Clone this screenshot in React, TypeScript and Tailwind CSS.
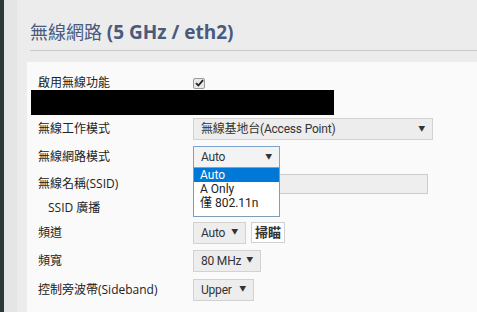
import React from "react";

const font = { fontFamily: '"Open Sans", "Noto Sans CJK TC", sans-serif' };
const ctl = { fontFamily: 'Roboto, "Noto Sans CJK TC", sans-serif' };

function Arrow() {
  return <span className="text-[7px] leading-none text-[#333]">▼</span>;
}

function Select({ text, w, focused = false }: { text: string; w: string; focused?: boolean }) {
  return (
    <div
      style={ctl}
      className={`${w} h-[22px] flex items-center justify-between pl-[7px] pr-[7px] border text-[12px] tracking-[-0.2px] text-[#333] ${
        focused ? "border-[#7da2ce] bg-[#f3f3f3]" : "border-[#d2d2d2] bg-[#ededed]"
      }`}
    >
      <span>{text}</span>
      <Arrow />
    </div>
  );
}

function Row({ label, h, children, indent = false }: { label: string; h: string; children?: React.ReactNode; indent?: boolean }) {
  return (
    <div className={`flex items-center ${h}`}>
      <div className={`w-[166px] shrink-0 text-[12px] text-[#222] ${indent ? "pl-[21px]" : "pl-[11px]"}`}>{label}</div>
      <div className="flex items-center gap-[5px] flex-1">{children}</div>
    </div>
  );
}

export default function App() {
  return (
    <div className="w-[477px] h-[312px] flex overflow-hidden" style={font}>
      <div className="w-[4px] bg-[#2c3838] shrink-0" />
      <div className="w-[13px] bg-[#e5e5e5] shrink-0" />
      <div className="flex-1 bg-[#ececec] flex flex-col">
        <div className="ml-[13px] h-[51px] border-b border-[#c9c9c9] flex items-end pb-[8px]">
          <span className="text-[18px] leading-none text-[#4a5a7c]">
            <span style={{ fontFamily: '"Noto Sans CJK TC", sans-serif' }}>無線網路</span>{" "}
            <span className="font-bold text-[19px]">(5 GHz / eth2)</span>
          </span>
        </div>
        <div className="mt-[11px] ml-[10px] flex-1 bg-[#fafafa] pt-[14px]">
          <Row label="啟用無線功能" h="h-[14px]">
            <div className="w-[12px] h-[11px] border border-[#9a9a9a] rounded-[2px] bg-[#e9e9e9] flex items-center justify-center">
              <svg width="9" height="8" viewBox="0 0 9 8">
                <path d="M1 4.2 L3.4 6.5 L8 1.2" stroke="#222" strokeWidth="1.8" fill="none" />
              </svg>
            </div>
          </Row>
          <div className="ml-[4px] w-[303px] h-[25px] bg-black" />
          <Row label="無線工作模式" h="h-[28px]">
            <Select text="無線基地台(Access Point)" w="w-[240px]" />
          </Row>
          <Row label="無線網路模式" h="h-[28px]">
            <div className="relative">
              <Select text="Auto" w="w-[87px]" focused />
              <div
                style={ctl}
                className="absolute left-0 top-full w-[87px] bg-white border border-[#7f9db9] border-t-0 z-10 text-[12px] leading-[14px] text-[#222]"
              >
                <div className="bg-[#0078d7] text-white pl-[6px] h-[14px]">Auto</div>
                <div className="pl-[6px] h-[14px]">A Only</div>
                <div className="pl-[6px] h-[14px] mb-[6px]">僅 802.11n</div>
              </div>
            </div>
          </Row>
          <Row label="無線名稱(SSID)" h="h-[26px]">
            <div className="w-[235px] h-[20px] bg-[#eeeeee] border border-[#cccccc]" />
          </Row>
          <Row label="SSID 廣播" h="h-[22px]" indent />
          <Row label="頻道" h="h-[27px]">
            <Select text="Auto" w="w-[53px]" />
            <div className="h-[21px] px-[3px] border border-[#d0d0d0] bg-white flex items-center text-[13px] font-bold text-[#333]">掃瞄</div>
          </Row>
          <Row label="頻寬" h="h-[29px]">
            <Select text="80 MHz" w="w-[68px]" />
          </Row>
          <Row label="控制旁波帶(Sideband)" h="h-[29px]">
            <Select text="Upper" w="w-[61px]" />
          </Row>
        </div>
      </div>
    </div>
  );
}
